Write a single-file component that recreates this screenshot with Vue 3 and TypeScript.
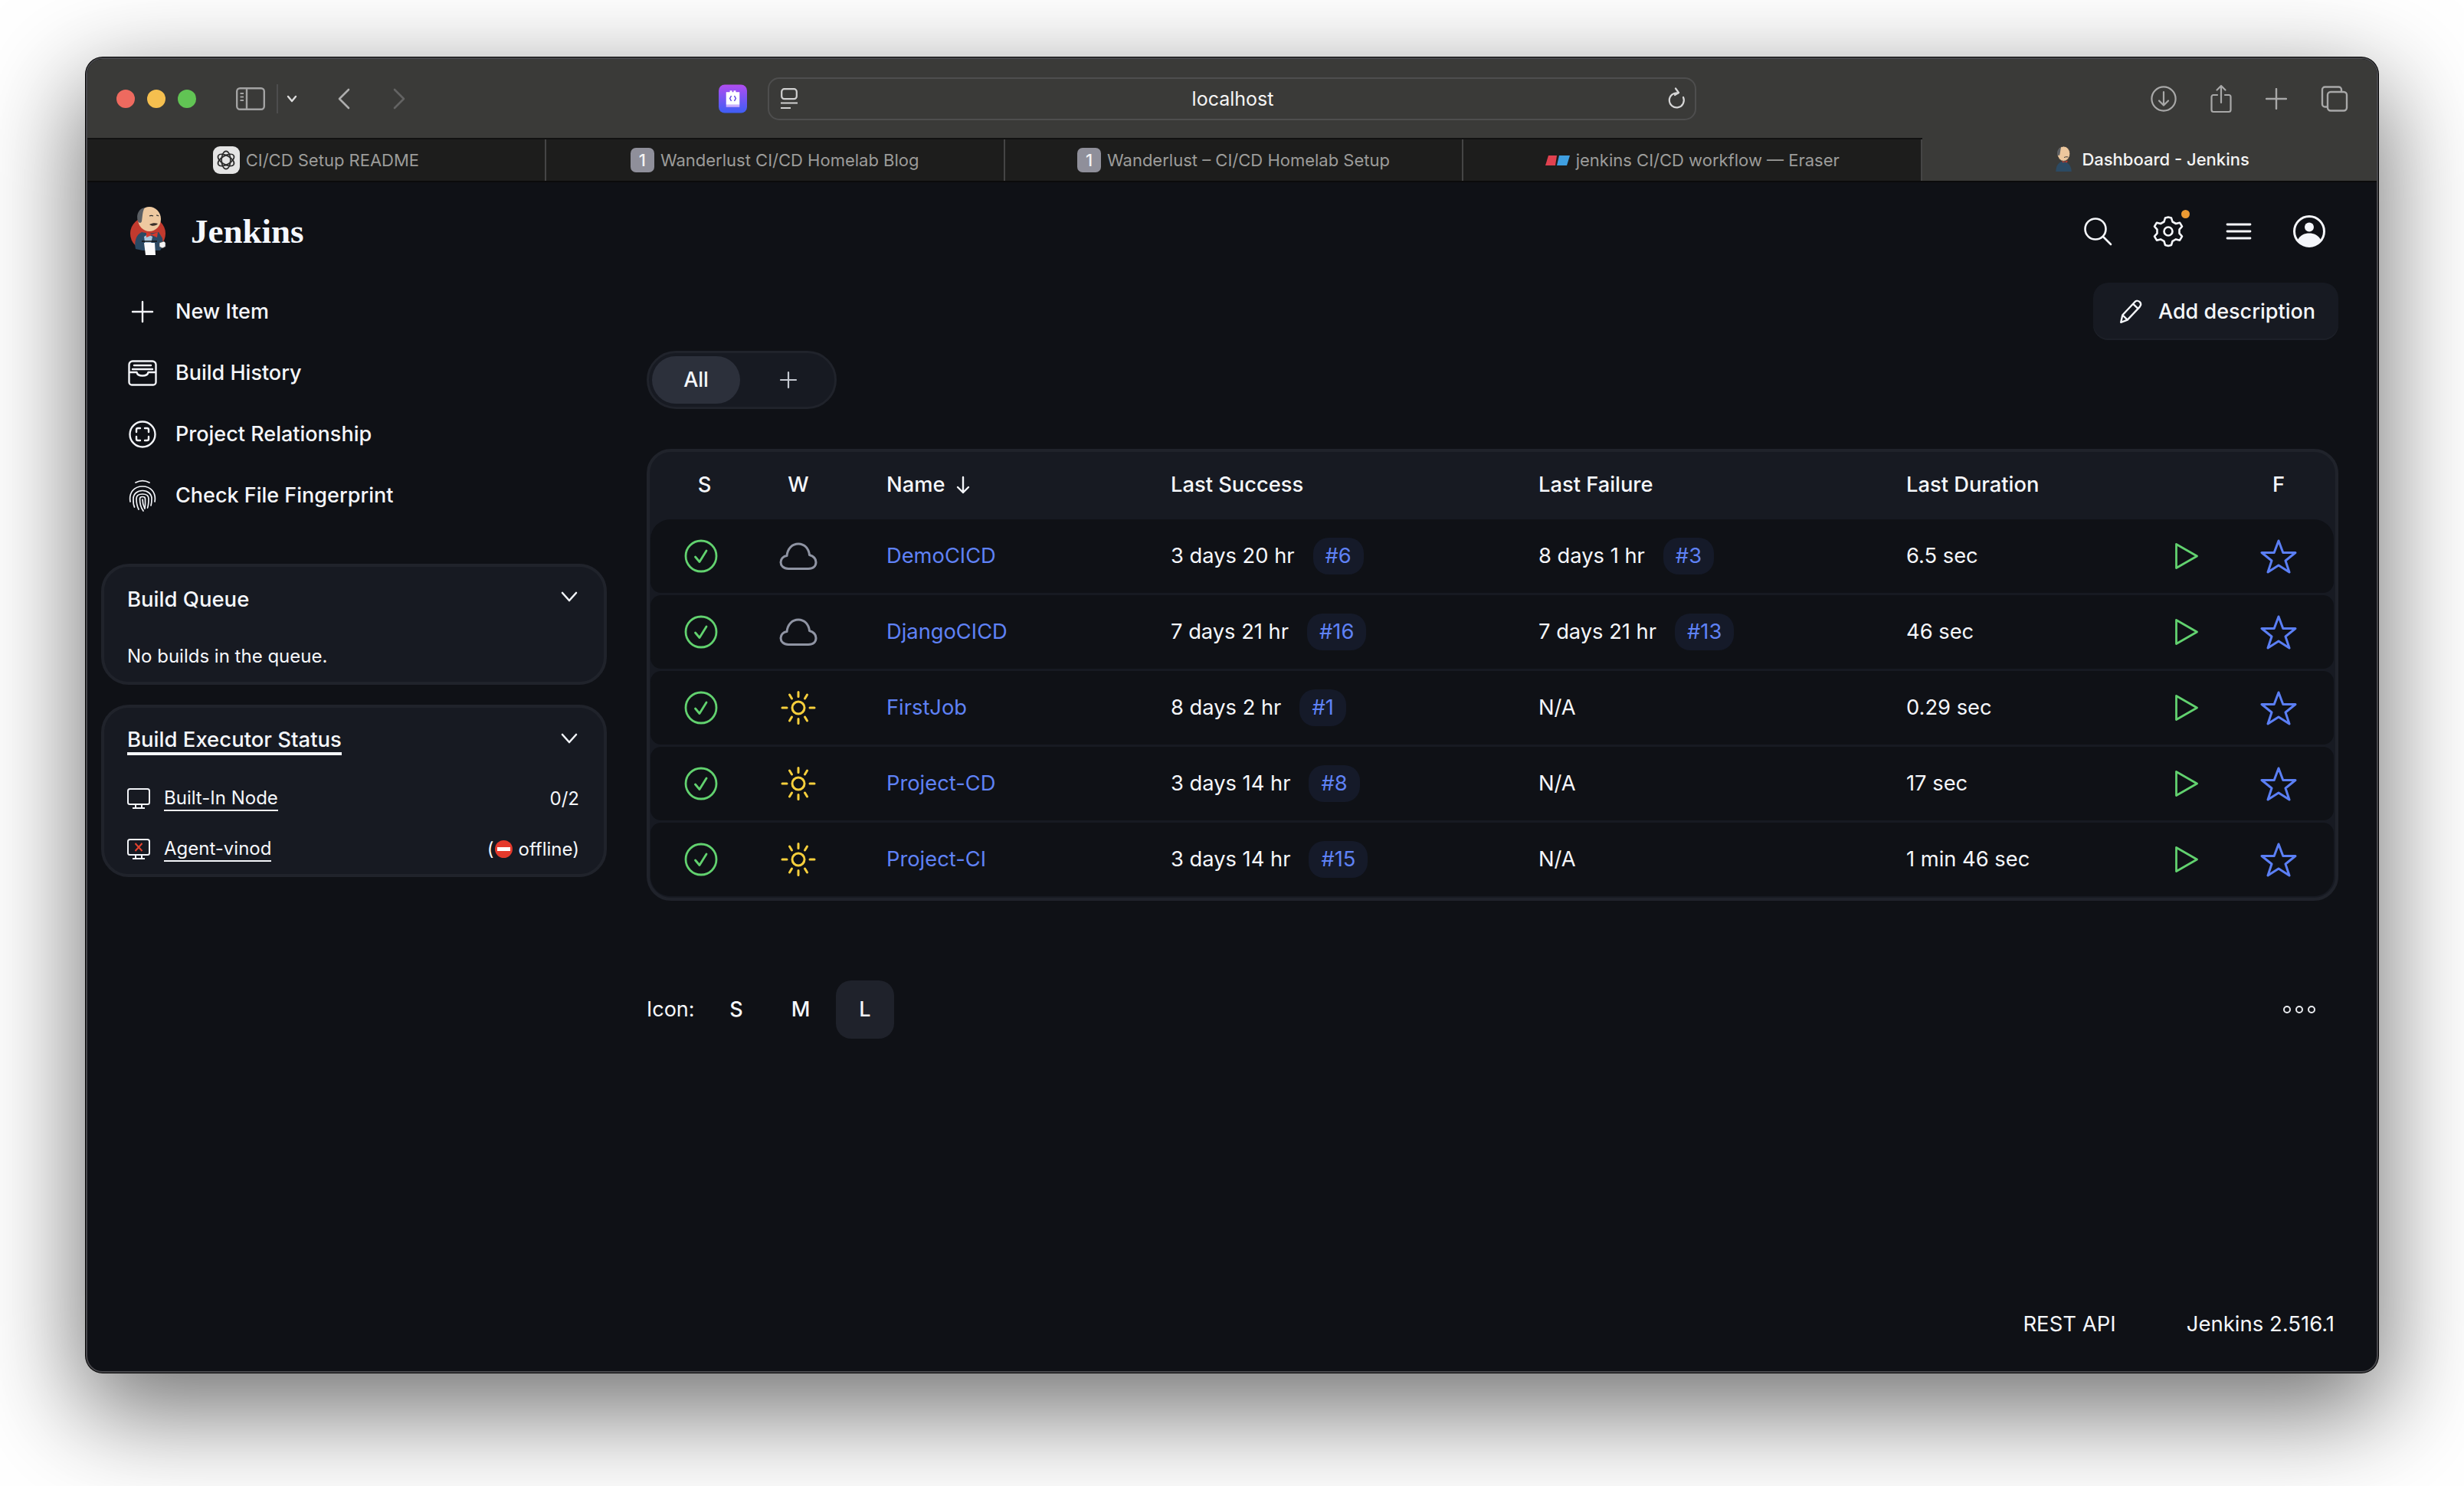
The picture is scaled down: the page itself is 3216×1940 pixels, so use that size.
<script setup lang="ts">
interface Job {
  name: string
  weather: 'cloud' | 'sun'
  success: string
  successBuild: string
  failure: string
  failureBuild?: string
  duration: string
}

const tabs = [
  { title: 'CI/CD Setup README', icon: 'gpt' },
  { title: 'Wanderlust CI/CD Homelab Blog', icon: 'badge' },
  { title: 'Wanderlust – CI/CD Homelab Setup', icon: 'badge' },
  { title: 'jenkins CI/CD workflow — Eraser', icon: 'eraser' }
]

const jobs: Job[] = [
  { name: 'DemoCICD', weather: 'cloud', success: '3 days 20 hr', successBuild: '#6', failure: '8 days 1 hr', failureBuild: '#3', duration: '6.5 sec' },
  { name: 'DjangoCICD', weather: 'cloud', success: '7 days 21 hr', successBuild: '#16', failure: '7 days 21 hr', failureBuild: '#13', duration: '46 sec' },
  { name: 'FirstJob', weather: 'sun', success: '8 days 2 hr', successBuild: '#1', failure: 'N/A', duration: '0.29 sec' },
  { name: 'Project-CD', weather: 'sun', success: '3 days 14 hr', successBuild: '#8', failure: 'N/A', duration: '17 sec' },
  { name: 'Project-CI', weather: 'sun', success: '3 days 14 hr', successBuild: '#15', failure: 'N/A', duration: '1 min 46 sec' }
]
</script>

<template>
  <div class="desktop">
    <div class="window">
      <div class="titlebar">
        <div class="lights">
          <span class="light red"></span>
          <span class="light yellow"></span>
          <span class="light green"></span>
        </div>
        <svg class="sidebar-icon" viewBox="0 0 38 30" fill="none" stroke="#a3a3a3" stroke-width="2.4">
          <rect x="1.2" y="1.2" width="35.6" height="27.6" rx="4" />
          <path d="M14 1.2v27.6" />
          <path d="M5.5 8h4.5M5.5 12.5h4.5M5.5 17h4.5" stroke-width="2" />
        </svg>
        <span class="chrome-divider"></span>
        <svg class="small-chevron" viewBox="0 0 14 10" fill="none" stroke="#dcdcdc" stroke-width="2.4" stroke-linecap="round" stroke-linejoin="round">
          <path d="M2 2l5 6 5-6" />
        </svg>
        <svg class="nav-back" viewBox="0 0 16 28" fill="none" stroke="#adadad" stroke-width="2.6" stroke-linecap="round" stroke-linejoin="round">
          <path d="M14 2L2 14l12 12" />
        </svg>
        <svg class="nav-forward" viewBox="0 0 16 28" fill="none" stroke="#636363" stroke-width="2.6" stroke-linecap="round" stroke-linejoin="round">
          <path d="M2 2l12 12L2 26" />
        </svg>
        <svg class="ext-icon" viewBox="0 0 38 38">
          <defs>
            <linearGradient id="extGrad" x1="0" y1="0" x2="0" y2="1">
              <stop offset="0" stop-color="#b04df0" />
              <stop offset="1" stop-color="#3e5ef5" />
            </linearGradient>
          </defs>
          <rect width="38" height="38" rx="8" fill="url(#extGrad)" />
          <path d="M10 10h5v-2h3v2h2v-2h3v2h5v17H10z" fill="#fff" />
          <path d="M10 27h18v3H10z" fill="#e9c3ff" opacity=".8" />
          <path d="M17 15l-2 3.5 2 3.5M21 15l2 3.5-2 3.5" fill="none" stroke="#5b3fe0" stroke-width="1.4" />
        </svg>
        <div class="address">
          <svg class="site-icon" viewBox="0 0 22 28" fill="none" stroke="#d0d0d0" stroke-width="2.2">
            <rect x="1.2" y="1.2" width="19.6" height="13" rx="3.5" />
            <path d="M0 19.5h22M0 26h13" />
          </svg>
          <span class="address-text">localhost</span>
          <svg class="reload-icon" viewBox="0 0 24 30" fill="none" stroke="#d6d6d6" stroke-width="2.2" stroke-linecap="round" stroke-linejoin="round">
            <path d="M20 13a9.5 9.5 0 1 1-7-5.5" />
            <path d="M10 1.5l4 5.500-5 3" />
          </svg>
        </div>
        <div class="chrome-actions">
          <svg class="act-download" viewBox="0 0 34 34" fill="none" stroke="#a8a8a8" stroke-width="2.2" stroke-linecap="round" stroke-linejoin="round">
            <circle cx="17" cy="17" r="15.6" />
            <path d="M17 8v17M11 19.5l6 6 6-6" />
          </svg>
          <svg class="act-share" viewBox="0 0 28 38" fill="none" stroke="#a8a8a8" stroke-width="2.2" stroke-linecap="round" stroke-linejoin="round">
            <path d="M9 14H4a2.5 2.5 0 0 0-2.5 2.5v17A2.5 2.5 0 0 0 4 36h20a2.5 2.5 0 0 0 2.5-2.5v-17A2.5 2.5 0 0 0 24 14h-5" />
            <path d="M14 24V2M8.5 7.5L14 2l5.5 5.5" />
          </svg>
          <svg class="act-plus" viewBox="0 0 28 28" fill="none" stroke="#a8a8a8" stroke-width="2.4" stroke-linecap="round">
            <path d="M14 1v26M1 14h26" />
          </svg>
          <svg class="act-tabs" viewBox="0 0 36 34" fill="none" stroke="#a8a8a8" stroke-width="2.4">
            <path d="M27 8V5a3.5 3.5 0 0 0-3.500-3.500h-18A3.500 3.500 0 0 0 2 5v19a3.500 3.500 0 0 0 3.500 3.500H9" />
            <rect x="9" y="8" width="25" height="24.5" rx="4" />
          </svg>
        </div>
      </div>

      <div class="tabstrip">
        <div v-for="tab in tabs" :key="tab.title" class="tab">
          <span v-if="tab.icon === 'gpt'" class="gpt-icon">
            <svg viewBox="0 0 36 36" fill="none" stroke="#2a2a2a" stroke-width="2">
              <ellipse cx="18" cy="18" rx="7" ry="14" />
              <ellipse cx="18" cy="18" rx="7" ry="14" transform="rotate(60 18 18)" />
              <ellipse cx="18" cy="18" rx="7" ry="14" transform="rotate(120 18 18)" />
            </svg>
          </span>
          <span v-else-if="tab.icon === 'badge'" class="tab-badge">1</span>
          <svg v-else class="eraser-icon" viewBox="0 0 32 13">
            <path d="M4 0h11l-2 13H0z" fill="#e0414f" />
            <path d="M18 0h14l-4 13H15z" fill="#3f9fe0" />
          </svg>
          <span>{{ tab.title }}</span>
        </div>
        <div class="tab active">
          <svg class="tab-logo" viewBox="22 12 48 70">
            <path d="M24 80c0-14 6-26 20-28 14 2 22 14 22 28z" fill="#2c4a63" />
            <path d="M40 50l8 3 8-3-2 6-6-2-6 2z" fill="#c8382c" />
            <ellipse cx="45" cy="32" rx="17" ry="20" fill="#edc79d" stroke="#333" stroke-width="1.5" />
            <path d="M28 36c-2-12 4-20 10-21-2 6-2 14-4 21z" fill="#5d6064" />
            <path d="M46 42c4-2 8-2 11-1" fill="none" stroke="#333" stroke-width="2" />
          </svg>
          <span>Dashboard - Jenkins</span>
        </div>
      </div>

      <div class="page">
        <header class="topbar">
          <svg class="logo" viewBox="18 14 50 68">
            <ellipse cx="43" cy="50" rx="23" ry="22" fill="#c23a2e" />
            <path d="M27 70c-2-9 0-18 8-22l10 2 12-2 5 8 1 10-4 6H36z" fill="#2b4963" />
            <path d="M38 54l5-3 6 3-3 14h-6z" fill="#a9c6dc" />
            <path d="M41 48l7 3 8-3-1 7-7-3-7 3z" fill="#d43a2d" />
            <ellipse cx="45" cy="31" rx="15" ry="16" fill="#eec9a0" />
            <path d="M30 34c-3-10 2-17 9-18-3 4-3 12-4 18-1 3-4 2-5 0z" fill="#5a5e63" />
            <path d="M45 27c2-1 3-1 5 0M54 26c1 0 2 0 3 1" stroke="#2b2b2b" stroke-width="1.2" fill="none" />
            <path d="M45 38c4-2 8-2 11-1-2 3-8 4-11 1z" fill="#3a3029" />
            <path d="M38 62h14l1 16H40z" fill="#fafafa" />
            <path d="M35 60l20 0" stroke="#111" stroke-width="1.5" />
            <path d="M58 62l6-2 2 2v5l-4 2-4-2z" fill="#f4f4f4" stroke="#444" stroke-width=".6" />
          </svg>
          <span class="brand">Jenkins</span>
          <div class="top-icons">
            <svg class="top-icon" viewBox="0 0 44 44" fill="none" stroke="#f5f7fb" stroke-width="2.6" stroke-linecap="round">
              <circle cx="19" cy="19" r="13.5" />
              <path d="M29 29l10 10" />
            </svg>
            <div class="gear-wrap">
              <svg class="top-icon" viewBox="0 0 44 44" fill="none" stroke="#f5f7fb" stroke-width="2.6" stroke-linejoin="round">
                <path d="M22 3.5l4 1 1.500 5 4.500 2.500 5-1.300 3 5-3.500 4v5l3.500 4-3 5-5-1.300-4.500 2.500-1.500 5-4 1-4-1-1.500-5-4.500-2.500-5 1.300-3-5 3.500-4v-5l-3.500-4 3-5 5 1.300 4.500-2.500 1.500-5z" />
                <circle cx="22" cy="22" r="5.5" />
              </svg>
              <span class="gear-dot"></span>
            </div>
            <svg class="top-icon" viewBox="0 0 44 44" fill="none" stroke="#f5f7fb" stroke-width="2.8" stroke-linecap="round">
              <path d="M7 13h30M7 22h30M7 31h30" />
            </svg>
            <svg class="top-icon" viewBox="0 0 44 44">
              <circle cx="22" cy="22" r="19.5" fill="none" stroke="#f5f7fb" stroke-width="3" />
              <circle cx="22" cy="16.5" r="6" fill="#f5f7fb" />
              <path d="M7 33c3-6 9-8.500 15-8.500S34 27 37 33c-3.500 5-9 8.500-15 8.500S10.500 38 7 33z" fill="#f5f7fb" />
            </svg>
          </div>
        </header>

        <div class="columns">
          <aside class="sidebar">
            <nav class="menu">
              <a class="menu-item">
                <span class="menu-icon">
                  <svg width="30" height="30" viewBox="0 0 30 30" fill="none" stroke="#f2f4f8" stroke-width="2.4" stroke-linecap="round"><path d="M15 2v26M2 15h26" /></svg>
                </span>
                New Item
              </a>
              <a class="menu-item">
                <span class="menu-icon">
                  <svg width="38" height="34" viewBox="0 0 38 34" fill="none" stroke="#f2f4f8" stroke-width="2.4" stroke-linecap="round" stroke-linejoin="round">
                    <path d="M1.5 16V6A4.5 4.5 0 0 1 6 1.5h26A4.5 4.5 0 0 1 36.5 6v10M1.5 16h10c1 6 14 6 15 0h10M1.5 16v13A3.5 3.5 0 0 0 5 32.5h28a3.5 3.5 0 0 0 3.5-3.5V16" />
                    <path d="M8 7h22M6 12h26" />
                  </svg>
                </span>
                Build History
              </a>
              <a class="menu-item">
                <span class="menu-icon">
                  <svg width="36" height="36" viewBox="0 0 36 36" fill="none" stroke="#f2f4f8" stroke-width="2.4" stroke-linecap="round" stroke-linejoin="round">
                    <circle cx="18" cy="18" r="16.5" />
                    <path d="M10 15v-3a2 2 0 0 1 2-2h3M21 10h3a2 2 0 0 1 2 2v3M26 21v3a2 2 0 0 1-2 2h-3M15 26h-3a2 2 0 0 1-2-2v-3" />
                  </svg>
                </span>
                Project Relationship
              </a>
              <a class="menu-item">
                <span class="menu-icon">
                  <svg width="36" height="42" viewBox="0 0 36 42" fill="none" stroke="#f2f4f8" stroke-width="1.7" stroke-linecap="round">
                    <path d="M9 4c5.5-3 12.5-3 18 0" />
                    <path d="M2 29c-2-12 5-20 16-20s18 8 16 20" />
                    <path d="M7.5 36c-2-4-1.5-8-1.5-11 0-6 5-10.5 12-10.5S30 19 30 25c0 3 0 6-1 9" />
                    <path d="M13 39c-2-4-3-9-3-14 0-4 3.5-6 8-6s8 2 8 6c0 4 0 8-1.5 12" />
                    <path d="M19 41c-3-4-4.5-10-4.5-16 0-1.5 1.5-2.5 3.5-2.5s3.5 1 3.5 2.5c0 4 .5 8-.5 12" />
                    <path d="M18 26c0 4 1 8 3 12" />
                  </svg>
                </span>
                Check File Fingerprint
              </a>
            </nav>

            <section class="card queue">
              <div class="card-head">
                <span>Build Queue</span>
                <svg class="card-chevron" viewBox="0 0 24 16" fill="none" stroke="#f2f4f8" stroke-width="2.6" stroke-linecap="round" stroke-linejoin="round"><path d="M3 3l9 10 9-10" /></svg>
              </div>
              <p class="queue-text">No builds in the queue.</p>
            </section>

            <section class="card executors">
              <div class="card-head">
                <span class="under-thick">Build Executor Status</span>
                <svg class="card-chevron" viewBox="0 0 24 16" fill="none" stroke="#f2f4f8" stroke-width="2.6" stroke-linecap="round" stroke-linejoin="round"><path d="M3 3l9 10 9-10" /></svg>
              </div>
              <div class="node-row">
                <svg class="node-icon" viewBox="0 0 30 27" fill="none" stroke="#f2f4f8" stroke-width="2">
                  <rect x="1" y="1" width="28" height="20" rx="2.5" />
                  <path d="M11 21v5M19 21v5M7 26h16" />
                </svg>
                <span class="node-link">Built-In Node</span>
                <span class="node-state">0/2</span>
              </div>
              <div class="node-row">
                <svg class="node-icon" viewBox="0 0 30 27" fill="none" stroke="#f2f4f8" stroke-width="2">
                  <rect x="1" y="1" width="28" height="20" rx="2.5" />
                  <path d="M11 21v5M19 21v5M7 26h16" />
                  <path d="M10.5 6l9 10M19.5 6l-9 10" stroke="#e5432f" />
                </svg>
                <span class="node-link">Agent-vinod</span>
                <span class="node-state offline">(<span class="no-entry"></span>offline)</span>
              </div>
            </section>
          </aside>

          <main class="main">
            <div class="main-actions">
              <button class="add-desc">
                <svg width="32" height="32" viewBox="0 0 30 30" fill="none" stroke="#f5f7fb" stroke-width="2.2" stroke-linejoin="round">
                  <path d="M3 28l2-9L20 3c2-2 4.5-1.5 6 0s2 3.5 0 6L11 25z" />
                  <path d="M5 19l6 6M18 5.5l6.5 6" />
                </svg>
                Add description
              </button>
            </div>

            <div class="views">
              <span class="view-active">All</span>
              <svg class="view-plus" viewBox="0 0 24 24" fill="none" stroke="#c4c8d0" stroke-width="2.2" stroke-linecap="round"><path d="M12 2v20M2 12h20" /></svg>
            </div>

            <div class="jobs">
              <div class="job-row job-head">
                <span class="cell-center s-head">S</span>
                <span class="cell-center">W</span>
                <span class="name-col name-head">
                  Name
                  <svg width="20" height="24" viewBox="0 0 20 24" fill="none" stroke="#f5f7fb" stroke-width="2.4" stroke-linecap="round" stroke-linejoin="round"><path d="M10 2v20M3 15l7 7 7-7" /></svg>
                </span>
                <span>Last Success</span>
                <span>Last Failure</span>
                <span>Last Duration</span>
                <span></span>
                <span class="cell-star">F</span>
              </div>
              <div v-for="job in jobs" :key="job.name" class="job-row job-item">
                <span class="cell-center">
                  <svg width="44" height="44" viewBox="0 0 44 44" fill="none" stroke="#62d26f" stroke-linecap="round" stroke-linejoin="round">
                    <circle cx="22" cy="22" r="20" stroke-width="2.8" />
                    <path d="M14.5 23l5.5 6.5L29 15" stroke-width="2.8" />
                  </svg>
                </span>
                <span class="cell-center">
                  <svg v-if="job.weather === 'cloud'" width="50" height="36" viewBox="0 0 50 36" fill="none" stroke="#8f94a3" stroke-width="3" stroke-linejoin="round">
                    <path d="M12 34.5C5.5 34.5 2 30.5 2 26c0-4.5 3.5-8 8-8.5C11 8 17 2 25 2c8 0 13.5 6 14.5 14.5C44.5 18 48 21.5 48 26c0 5-3.5 8.5-10 8.5z" />
                  </svg>
                  <svg v-else width="46" height="44" viewBox="0 0 46 44" fill="none" stroke="#f7cf3c" stroke-width="3" stroke-linecap="round">
                    <circle cx="23" cy="22" r="8" />
                    <path d="M23 1.5v6M23 36.5v6M2 22h6M38 22h6M11.5 5l3 5M34.5 5l-3 5M11.5 39l3-5M34.5 39l-3-5" />
                  </svg>
                </span>
                <a class="name-col job-link">{{ job.name }}</a>
                <span class="time-cell">
                  {{ job.success }}
                  <span class="build-pill">{{ job.successBuild }}</span>
                </span>
                <span class="time-cell">
                  {{ job.failure }}
                  <span v-if="job.failureBuild" class="build-pill">{{ job.failureBuild }}</span>
                </span>
                <span>{{ job.duration }}</span>
                <span class="cell-center play-cell">
                  <svg width="32" height="36" viewBox="0 0 32 36" fill="none" stroke="#62d26f" stroke-width="2.8" stroke-linejoin="round">
                    <path d="M2.5 2.5L29.5 18 2.5 33.5z" />
                  </svg>
                </span>
                <span class="cell-star">
                  <svg width="48" height="46" viewBox="0 0 48 46" fill="none" stroke="#5b7ff5" stroke-width="3" stroke-linejoin="round">
                    <path d="M24 3l5.800 15.500H46l-13 10.500 5 15-14-9-14 9 5-15L2 18.500h16.200z" />
                  </svg>
                </span>
              </div>
            </div>

            <div class="legend">
              <span class="legend-label">Icon:</span>
              <span class="size-btn">S</span>
              <span class="size-btn">M</span>
              <span class="size-btn size-active">L</span>
              <svg class="legend-dots" viewBox="0 0 44 12" fill="none" stroke="#e8eaee" stroke-width="2">
                <circle cx="6" cy="6" r="4" />
                <circle cx="22" cy="6" r="4" />
                <circle cx="38" cy="6" r="4" />
              </svg>
            </div>
          </main>
        </div>

        <footer class="footer">
          <span>REST API</span>
          <span>Jenkins 2.516.1</span>
        </footer>
      </div>
    </div>
  </div>
</template>

<style>
html, body {
  margin: 0;
  background: #fff;
}
</style>

<style scoped>
.desktop {
  box-sizing: border-box;
  width: 3216px;
  height: 1940px;
  padding: 75px 0 0 112px;
  overflow: hidden;
  background: #fff;
}
.window {
  box-sizing: border-box;
  width: 2992px;
  height: 1717px;
  border: 2px solid #47474b;
  border-radius: 22px;
  box-shadow: 0 0 0 1px #000, 0 44px 130px 8px rgba(0, 0, 0, 0.55);
  background: #0f1116;
  overflow: hidden;
  display: flex;
  flex-direction: column;
  font-family: Inter, "Noto Sans", sans-serif;
  color: #f5f7fb;
}

.titlebar {
  height: 103px;
  flex: none;
  display: flex;
  align-items: center;
  background: #3a3a38;
}
.lights {
  display: flex;
  gap: 16px;
  margin-left: 38px;
}
.light {
  width: 24px;
  height: 24px;
  border-radius: 50%;
}
.red { background: #ee6a5f; }
.yellow { background: #f5bf4f; }
.green { background: #61c454; }
.sidebar-icon { width: 38px; height: 30px; margin-left: 52px; }
.chrome-divider { width: 2px; height: 38px; background: #4d4d4d; margin-left: 15px; }
.small-chevron { width: 14px; height: 10px; margin-left: 11px; }
.nav-back { width: 16px; height: 28px; margin-left: 53px; }
.nav-forward { width: 16px; height: 28px; margin-left: 56px; }
.ext-icon { width: 37px; height: 38px; margin-left: 409px; }
.address {
  box-sizing: border-box;
  width: 1212px;
  height: 56px;
  margin-left: 27px;
  padding: 0 11px 0 15px;
  border: 2px solid #4e4e4e;
  border-radius: 15px;
  display: flex;
  align-items: center;
}
.site-icon { width: 22px; height: 28px; }
.address-text {
  flex: 1;
  text-align: center;
  font-size: 25px;
  color: #f4f4f4;
}
.reload-icon { width: 24px; height: 30px; }
.chrome-actions {
  margin-left: auto;
  padding-right: 37px;
  display: flex;
  align-items: center;
  gap: 44px;
}
.act-download { width: 34px; height: 34px; }
.act-share { width: 28px; height: 38px; }
.act-plus { width: 28px; height: 28px; }
.act-tabs { width: 36px; height: 34px; }

.tabstrip {
  height: 58px;
  flex: none;
  display: flex;
  background: #1d1d1c;
  border-top: 2px solid #111;
  border-bottom: 2px solid #0b0b0b;
  box-sizing: border-box;
}
.tab {
  flex: 0 0 598.8px;
  min-width: 0;
  box-sizing: border-box;
  display: flex;
  align-items: center;
  justify-content: center;
  gap: 8px;
  font-size: 22px;
  color: #9c9c9a;
  border-right: 2px solid #454545;
}
.tab.active {
  flex: 1;
  background: #3a3a38;
  color: #f4f4f4;
  border-right: 0;
  font-weight: 500;
  margin-top: -2px;
  padding-left: 6px;
  gap: 10px;
}
.gpt-icon {
  width: 35px;
  height: 36px;
  border-radius: 9px;
  background: #e4e4e4;
  display: flex;
  align-items: center;
  justify-content: center;
}
.gpt-icon svg { width: 30px; height: 30px; }
.tab-badge {
  width: 31px;
  height: 32px;
  border-radius: 7px;
  background: #8f8f9a;
  color: #f4f4f4;
  font-size: 22px;
  font-weight: 500;
  display: flex;
  align-items: center;
  justify-content: center;
}
.eraser-icon { width: 32px; height: 13px; }
.tab-logo { width: 26px; height: 34px; }

.page {
  flex: 1;
  min-height: 0;
  display: flex;
  flex-direction: column;
  font-size: 27px;
  line-height: 36px;
}
.topbar {
  height: 129px;
  flex: none;
  box-sizing: border-box;
  display: flex;
  align-items: center;
  padding: 0 66px 2px 54px;
}
.logo { width: 50px; height: 68px; margin-top: 2px; }
.brand {
  margin-left: 31px;
  font-family: "Liberation Serif", Georgia, serif;
  font-weight: 700;
  font-size: 45px;
  color: #f5f8fe;
}
.top-icons {
  margin-left: auto;
  display: flex;
  align-items: center;
  gap: 48px;
}
.top-icon { width: 44px; height: 44px; display: block; }
.gear-wrap { position: relative; }
.gear-dot {
  position: absolute;
  top: -6px;
  right: -6px;
  width: 11px;
  height: 11px;
  border-radius: 50%;
  background: #ec9a32;
}

.columns {
  flex: 1;
  min-height: 0;
  display: flex;
  gap: 52px;
  padding: 0 50px 0 18px;
}
.sidebar {
  width: 660px;
  flex: none;
  display: flex;
  flex-direction: column;
}
.menu { display: flex; flex-direction: column; }
.menu-item {
  height: 80px;
  display: flex;
  align-items: center;
  font-weight: 450;
}
.menu-icon {
  width: 72px;
  margin: 0 7px 0 18px;
  display: flex;
  justify-content: center;
}
.card {
  box-sizing: border-box;
  border: 4px solid #20232b;
  border-radius: 36px;
  background: #171a22;
  padding: 0 32px 0 30px;
}
.queue { height: 158px; margin-top: 49px; }
.executors { height: 225px; margin-top: 26px; }
.card-head {
  height: 84px;
  display: flex;
  align-items: center;
  justify-content: space-between;
  font-size: 27.5px;
  font-weight: 450;
}
.under-thick {
  border-bottom: 4px solid #f5f7fb;
  line-height: 34px;
}
.card-chevron { width: 24px; height: 16px; margin-right: 1px; margin-top: -6px; }
.queue-text {
  margin: 16px 0 0;
  font-size: 24px;
  line-height: 34px;
}
.executors .card-head { height: 86px; }
.node-row {
  height: 67px;
  margin-top: -1px;
  display: flex;
  align-items: center;
  font-size: 24px;
}
.node-icon { width: 30px; height: 27px; margin-right: 18px; }
.node-link {
  border-bottom: 2px solid #f5f7fb;
  line-height: 30px;
}
.node-state { margin-left: auto; }
.offline { display: flex; align-items: center; }
.no-entry {
  width: 23px;
  height: 23px;
  margin: 0 8px 0 1px;
  border-radius: 50%;
  background: #e53a2c;
  position: relative;
  display: inline-block;
}
.no-entry::after {
  content: "";
  position: absolute;
  left: 3px;
  right: 3px;
  top: 9px;
  height: 5px;
  background: #fff;
}

.main {
  width: 2208px;
  flex: none;
  display: flex;
  flex-direction: column;
  padding-top: 2px;
}
.main-actions { display: flex; justify-content: flex-end; }
.add-desc {
  height: 75px;
  padding: 0 30px 0 33px;
  border: 0;
  border-radius: 20px;
  background: #171a22;
  box-shadow: inset 0 -2px 0 #1d2028;
  color: #f5f7fb;
  font: inherit;
  font-weight: 450;
  display: flex;
  align-items: center;
  gap: 20px;
}
.views {
  box-sizing: border-box;
  width: 248px;
  height: 76px;
  margin-top: 14px;
  padding: 0 4px;
  border: 3px solid #20232b;
  border-radius: 38px;
  background: #171a22;
  display: flex;
  align-items: center;
}
.view-active {
  width: 115px;
  height: 62px;
  border-radius: 31px;
  background: #2c303b;
  font-weight: 500;
  display: flex;
  align-items: center;
  justify-content: center;
}
.view-plus { width: 24px; height: 24px; margin-left: 51px; }

.jobs {
  box-sizing: border-box;
  margin-top: 52px;
  border: 4px solid #20232b;
  border-radius: 32px;
  background: #171a22;
  padding: 0 2px 2px 1px;
  display: flex;
  flex-direction: column;
  gap: 3px;
  overflow: hidden;
  font-size: 27.3px;
}
.job-row {
  display: grid;
  grid-template-columns: 131px 124px 424px 480px 480px 302px 126px 130px;
  align-items: center;
}
.job-head {
  height: 85px;
  font-weight: 450;
}
.job-item {
  height: 96px;
  background: #0f1116;
  border-radius: 14px;
}
.job-head + .job-item { border-radius: 26px 26px 14px 14px; }
.job-item:last-child { border-radius: 14px 14px 26px 26px; }
.cell-center {
  display: flex;
  align-items: center;
  justify-content: center;
}
.s-head { padding-left: 10px; }
.play-cell { padding-left: 2px; }
.cell-star {
  display: flex;
  justify-content: center;
  padding-right: 14px;
}
.name-col { padding-left: 53px; }
.name-head {
  display: flex;
  align-items: center;
  gap: 14px;
}
.job-link { color: #5f82f6; }
.time-cell {
  display: flex;
  align-items: center;
  gap: 24px;
}
.build-pill {
  height: 48px;
  padding: 0 16px;
  border-radius: 20px;
  background: #151a29;
  color: #5f82f6;
  display: flex;
  align-items: center;
}

.legend {
  margin-top: 104px;
  height: 76px;
  display: flex;
  align-items: center;
}
.legend-label { width: 79px; }
.size-btn {
  width: 76px;
  height: 76px;
  border-radius: 20px;
  margin-right: 8px;
  display: flex;
  align-items: center;
  justify-content: center;
  font-weight: 450;
}
.size-active { background: #1f222b; }
.legend-dots { width: 44px; height: 12px; margin-left: auto; margin-right: 29px; }

.footer {
  height: 124px;
  flex: none;
  box-sizing: border-box;
  display: flex;
  justify-content: flex-end;
  align-items: center;
  gap: 92px;
  padding-right: 55px;
  font-size: 27.5px;
}
</style>
